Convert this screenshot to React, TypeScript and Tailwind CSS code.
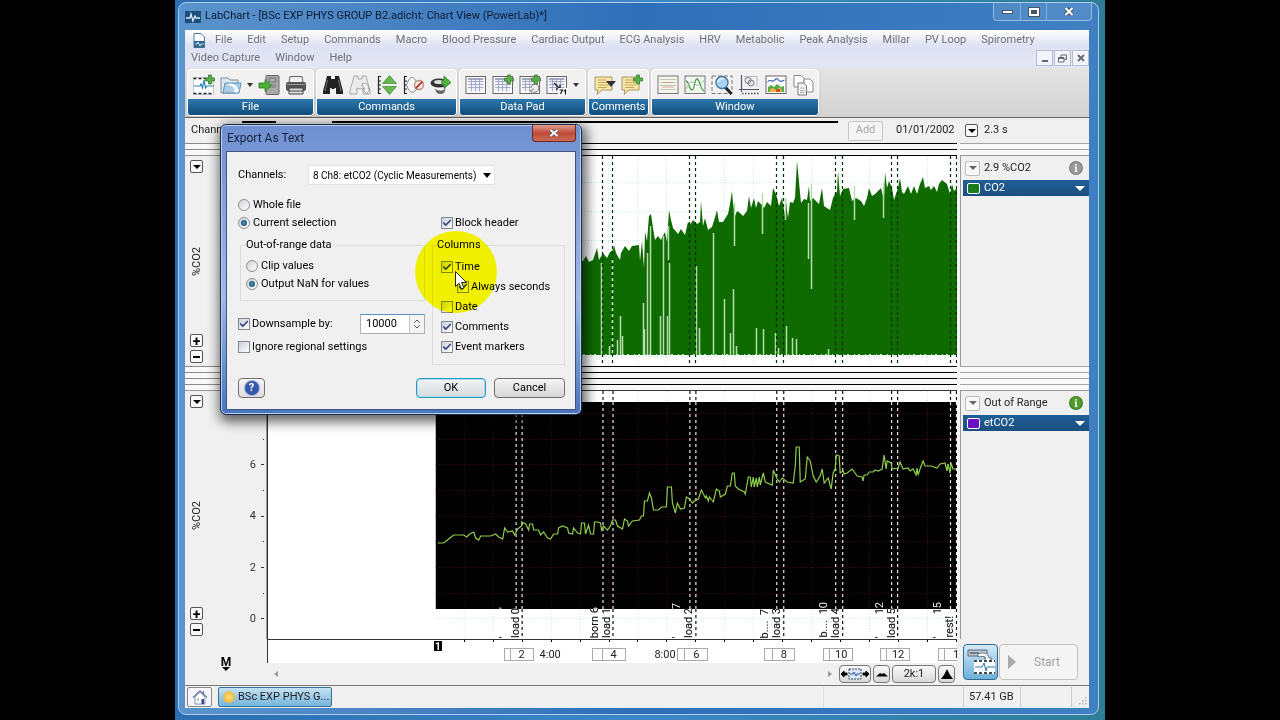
import React from 'react';
import { Check, ChevronsUpDown } from 'lucide-react';

const MENU_ROW_1 = [
  'File', 'Edit', 'Setup', 'Commands', 'Macro', 'Blood Pressure', 'Cardiac Output',
  'ECG Analysis', 'HRV', 'Metabolic', 'Peak Analysis', 'Millar', 'PV Loop', 'Spirometry',
];
const MENU_ROW_2 = ['Video Capture', 'Window', 'Help'];

// chart space: 690 units wide, the recording starts at 168
const CHART_W = 690;
const DATA_X = 168;
const GRID_X = Array.from({ length: 18 }, (_, i) => 196 + i * 29);
const MARKERS = [248, 254, 335, 345, 422, 428, 509, 516, 568, 575, 624, 630, 683, 689];

const CO2_TOP =
  '168,125 200,122 240,120 270,116 300,110 316,105 319,100 322,106 326,104 330,92 332,104 336,97 340,102 343,96 346,94 347,89 349,97 353,104 354,97 358,90 362,95 365,90 372,89 373,105 375,85 377,112 378,76 380,85 382,60 384,58 386,72 388,84 391,80 394,84 398,76 400,86 402,54 404,64 406,72 411,78 414,73 418,79 421,66 423,69 426,64 430,68 433,66 434,45 436,70 438,62 441,74 445,71 449,58 450,54 452,66 456,66 461,58 463,48 465,35 466,47 468,60 470,55 473,57 476,60 480,55 482,40 484,52 487,42 489,52 491,45 494,48 497,52 500,46 504,50 506,32 509,38 512,50 515,42 518,60 519,45 521,62 523,46 526,47 528,42 529,24 530,5 532,26 534,47 537,43 540,44 542,30 543,45 546,42 552,48 555,32 557,50 563,54 566,42 568,38 570,36 571,15 573,40 576,33 582,32 585,45 589,42 594,45 597,50 600,42 602,32 605,40 608,38 614,32 617,44 618,16 620,32 622,25 625,32 627,44 631,32 633,22 635,36 637,38 641,30 644,38 647,30 650,38 653,28 656,21 658,32 662,30 664,34 667,30 670,36 672,28 675,24 680,28 683,38 685,28 687,35 690,32';

// x, top, bottom of the drop-outs in the CO2 signal
const CO2_DROPS = [
  [334, 107, 199], [342, 190, 199], [350, 184, 199], [353, 160, 199], [355, 180, 199], [376, 147, 199],
  [377, 173, 199], [380, 97, 199], [383, 70, 199], [393, 160, 199], [396, 80, 199], [400, 160, 199],
  [402, 107, 199], [401, 70, 104], [429, 110, 199], [432, 172, 199], [446, 77, 199], [457, 143, 199],
  [463, 177, 199], [466, 133, 199], [467, 47, 90], [469, 190, 199], [489, 172, 199], [496, 173, 199],
  [495, 37, 78], [508, 177, 199], [511, 192, 199], [519, 170, 199], [525, 182, 199], [529, 183, 199],
  [518, 42, 64], [541, 47, 103], [544, 28, 133], [561, 193, 199], [587, 30, 64], [616, 27, 62],
];

const ETCO2 =
  '170,152 176,152 181,148 186,144 196,144 199,146 202,143 206,141 208,147 211,149 213,145 223,145 228,143 231,146 235,148 237,137 240,141 245,140 247,144 250,138 254,135 254,131 258,133 261,139 262,133 265,133 266,139 271,139 273,144 276,141 280,147 283,148 286,143 290,143 291,137 295,135 300,137 301,142 305,143 306,137 310,142 313,143 314,132 317,132 318,143 321,134 323,143 326,143 327,131 330,131 333,132 334,139 336,135 340,139 343,135 345,129 348,129 350,135 355,138 357,128 360,130 361,135 365,130 372,129 374,125 376,125 377,110 380,110 382,102 384,107 386,119 391,119 394,116 399,116 400,96 404,96 405,112 408,122 410,112 413,118 417,117 419,106 422,108 425,112 427,110 431,108 434,99 438,107 439,105 441,110 442,106 446,111 449,98 452,100 453,106 458,103 460,95 463,95 465,82 467,82 468,95 471,98 477,101 478,103 481,86 483,86 484,96 486,86 487,96 489,87 490,96 492,86 493,94 496,82 498,91 505,94 506,79 510,88 512,91 515,87 520,91 526,92 528,75 529,56 532,56 533,91 538,88 540,66 543,70 546,85 549,91 553,85 555,78 557,92 561,87 564,98 566,82 568,78 569,64 572,65 573,82 576,80 577,83 580,82 585,78 590,85 595,86 596,90 597,84 600,84 602,81 606,81 608,79 611,80 615,78 617,64 619,78 620,70 624,72 625,78 631,77 633,71 636,78 641,77 643,80 646,78 649,84 650,77 651,84 653,78 656,70 658,75 664,75 670,77 673,73 678,72 680,80 681,73 683,82 684,72 686,78 689,78';

const COMMENTS = [
  { x: 247, text: 'load 0', prev: "'          '" },
  { x: 338, text: 'load 1', prev: 'born 6' },
  { x: 421, text: 'load 2', prev: "'          7" },
  { x: 509, text: 'load 3', prev: 'b....  7' },
  { x: 568, text: 'load 4', prev: 'b....  10' },
  { x: 624, text: 'load 5', prev: "'        12" },
  { x: 682, text: 'rest!', prev: "'        15" },
];

const TIME_MARKS = [
  { x: 236, w: 30, div: 6, text: '2' },
  { x: 324, w: 34, div: 10, text: '4' },
  { x: 410, w: 31, div: 7, text: '6' },
  { x: 497, w: 31, div: 8, text: '8' },
  { x: 556, w: 30, div: 6, text: '10' },
  { x: 613, w: 30, div: 6, text: '12' },
  { x: 671, w: 30, div: 6, text: '1' },
];

const pct = (x: number) => `${(x / CHART_W) * 100}%`;

/* ---------- toolbar icons ---------- */

const Icon: React.FC<{ children: React.ReactNode; className?: string }> = ({ children, className }) => (
  <svg viewBox="0 0 22 22" className={className ?? 'size-[22px]'} fill="none" aria-hidden="true">
    {children}
  </svg>
);

const Plus = () => (
  <path d="M15.500 1h3v3h3v3h-3v3h-3V7h-3V4h3z" fill="#5cae4a" stroke="#357f2a" strokeWidth="0.8" />
);

const Sheet = () => (
  <>
    <rect x="1" y="2.5" width="19.5" height="17" fill="#fff" stroke="#666" />
    <rect x="3" y="4.5" width="15.5" height="13" fill="#eef1f8" />
    <path d="M3 7.5h15.5M3 10.5h15.5M3 13.5h15.5M6.5 4.5v13M10.5 4.5v13M14.5 4.5v13" stroke="#8a90b4" strokeWidth="0.7" />
    <path d="M3 5h15.5" stroke="#8a90b4" strokeWidth="1.4" />
  </>
);

const Note = () => (
  <path d="M1 3h17v13H8l-5 4.5 1-4.5H1z" fill="#f8e6a8" stroke="#96834d" strokeWidth="0.8" />
);

const NoteLines = () => <path d="M4 6h8M4 8.5h11M4 11h11M4 13.5h9" stroke="#b89842" strokeWidth="0.8" />;

const fileIcons = [
  <Icon key="new">
    <rect x="0.5" y="3.5" width="20" height="17" fill="#fff" stroke="#9ab" strokeWidth="0.600" />
    <path d="M0.5 4.5h20M0.5 19.5h20" stroke="#222" strokeWidth="1.6" strokeDasharray="3 2" />
    <path d="M1 12h6l1-2 1.500 4 1.500-8 1.500 8 1.500-2H21" stroke="#2c83b6" strokeWidth="1.200" />
    <Plus />
  </Icon>,
  <Icon key="open">
    <path d="M1 4h7l2 2h8v13H1z" fill="#dfe9f1" stroke="#788b99" />
    <path d="M3 19 5 9h16l-2 10z" fill="#a9cfe8" stroke="#5f8eaf" />
    <path d="M6 11c6-3 11 0 12 5l2-1-3 4-4-2 2-1c-1-3-4-5-9-5z" fill="#fff" />
  </Icon>,
  <Icon key="save">
    <rect x="8" y="1.500" width="13" height="19" rx="1" fill="#a9a9a9" stroke="#666" />
    <path d="M11 4h7v4h-7zM11 11h7M11 13h7" stroke="#777" />
    <path d="M1 9h6V5.500l6.500 6-6.500 6V14H1z" fill="#4aae35" stroke="#2f7a22" strokeWidth="0.8" />
  </Icon>,
  <Icon key="print">
    <path d="M5 2.500h12l1 6H4z" fill="#eee" stroke="#666" />
    <rect x="1" y="8" width="20" height="9" rx="2" fill="#555" />
    <path d="M2 10.500h18" stroke="#999" />
    <path d="M4 14h14v6H4z" fill="#ddd" stroke="#444" />
    <path d="M4 17h14" stroke="#444" />
  </Icon>,
];

const binocularsPath =
  'M5 2h4v3h4V2h4l1 4 3 11v3h-7v-6h-1l-1 1h-2l-1-1H8v6H1v-3L4 6z';

const commandIcons = [
  <Icon key="find">
    <path d={binocularsPath} fill="#222" />
    <path d="M5.500 6 3 17M16.500 6 19 17" stroke="#888" strokeWidth="0.8" />
  </Icon>,
  <Icon key="findnext">
    <path d={binocularsPath} fill="#ececec" stroke="#999" strokeWidth="0.8" />
    <path d="M13 10c4-2 7 1 6 5l2 0-3.500 5-3.500-5h2c0-2-1-3-3-3z" fill="#fff" stroke="#888" strokeWidth="0.8" />
  </Icon>,
  <Icon key="autoscale">
    <path d="M2.500 2v18M2.500 2.500H5M2.500 7H5M2.500 11H5M2.500 15H5M2.500 19.500H5" stroke="#222" strokeWidth="1.200" />
    <path d="M13.500 1.500 20.500 9.500h-14zM13.500 20.500l7-8h-14z" fill="#67b651" stroke="#3b8a2c" strokeWidth="0.700" />
  </Icon>,
  <Icon key="noscale">
    <path d="M1.500 2v18M1.500 2.500H4M1.500 7H4M1.500 11H4M1.500 15H4M1.500 19.500H4" stroke="#222" strokeWidth="1.200" />
    <path d="M4 10c3-9 7-8 10-1M4 12c3 8 7 8 10 2" fill="#f8f8f8" stroke="#888" />
    <circle cx="16" cy="11" r="4.500" fill="#f4ebe8" stroke="#b98a80" strokeWidth="1.400" />
    <path d="m12.500 14.500 7-7" stroke="#c0402e" strokeWidth="1.800" />
  </Icon>,
  <Icon key="macro">
    <ellipse cx="9" cy="9" rx="8.500" ry="4.500" fill="#333" />
    <ellipse cx="9" cy="8" rx="5" ry="2" fill="#ddd" />
    <path d="M3 13c2 4 10 5 13 1l-2 5c-3 2-8 1-8-2z" fill="#666" />
    <path d="M12 6h2V2l7 6.500-7 6V11h-2z" fill="#55b03f" stroke="#2f7a22" strokeWidth="0.800" />
  </Icon>,
];

const dataPadIcons = [
  <Icon key="pad"><Sheet /></Icon>,
  <Icon key="padadd"><Sheet /><Plus /></Icon>,
  <Icon key="padmulti">
    <Sheet />
    <path d="M12 14a4 4 0 1 1 3 4l0 2-4-3 4-2" fill="#eee" stroke="#777" />
    <Plus />
  </Icon>,
  <Icon key="padopts">
    <Sheet />
    <path d="m8 9 6 6M14 11v4h-4" stroke="#222" strokeWidth="1.400" />
    <rect x="12" y="14" width="10" height="7.500" fill="#fff" />
    <path d="M13.500 16h3l-2 4M18 17l1.500-1v4.500" stroke="#111" strokeWidth="1.200" />
  </Icon>,
];

const commentIcons = [
  <Icon key="note"><Note /><NoteLines /><path d="M12 7h10l-5 6z" fill="#333" /></Icon>,
  <Icon key="noteadd"><Note /><NoteLines /><Plus /></Icon>,
];

const windowIcons = [
  <Icon key="zoomlist">
    <rect x="1" y="2" width="20" height="17.500" fill="#f5f5ec" stroke="#777" />
    <path d="M3 5.500h16M3 8.500h16M3 11.500h16M3 15.500h16" stroke="#b9c9b4" />
    <path d="M6 8.500h10M5 13h12" stroke="#d8937e" strokeWidth="0.800" />
  </Icon>,
  <Icon key="scope">
    <rect x="1" y="2" width="20" height="17.500" fill="#f2f6ee" stroke="#777" />
    <path d="M2 7c3 0 3 9 6 9s2-11 5-11 3 11 7 12" stroke="#4c9c50" strokeWidth="1.300" />
    <path d="M2 15c3-6 5-9 8-6s5 4 10-3" stroke="#9bc49a" />
  </Icon>,
  <Icon key="zoom">
    <rect x="1" y="2" width="20" height="17.500" fill="#f2f2f2" stroke="#777" strokeDasharray="4 2" />
    <path d="m14.500 13.500 6 6.500" stroke="#222" strokeWidth="3" />
    <circle cx="11" cy="8.500" r="6" fill="#a8d3f2" stroke="#3f77a6" strokeWidth="1.400" />
    <path d="M7 8a4 4 0 0 1 6-3" stroke="#fff" strokeWidth="1.300" />
  </Icon>,
  <Icon key="xy">
    <path d="M3.500 1v17M1 15.500h20" stroke="#556" strokeWidth="1.200" />
    <path d="M4 19.500h17" stroke="#556" strokeWidth="1.500" strokeDasharray="1.500 1.500" />
    <path d="M6 2.500h13v10" stroke="#bbc" />
    <circle cx="10" cy="6.500" r="3" stroke="#778" />
    <circle cx="13" cy="9" r="3" stroke="#778" />
  </Icon>,
  <Icon key="spectrum">
    <rect x="1" y="2" width="20" height="17.500" fill="#fff" stroke="#666" />
    <path d="M2.500 8c3-4 4 0 6-1s3-4 5-1 4 1 6 0" stroke="#3f63b5" strokeWidth="1.200" />
    <path d="M3 18v-5l3-2 3 2 3-3 4 3 3-1v6z" fill="#59a94a" />
    <path d="M5 18v-3l3-1 3 2 4-3 2 5z" fill="#f0b640" />
    <path d="M11 15h4v3h-4z" fill="#d44a33" />
  </Icon>,
  <Icon key="layout">
    <path d="M2 1.500h7l3 3V13H2z" fill="#fff" stroke="#888" />
    <path d="M12 5h6l3 3v10h-9z" fill="#fff" stroke="#888" />
    <path d="M6 9h6l2.500 3v9H6z" fill="#f4f4f4" stroke="#777" />
    <path d="M8 14h4.500M8 16.500h4.500M8 18.500h4.500" stroke="#999" strokeWidth="0.800" />
  </Icon>,
];

const DropArrow = () => <span className="border-x-[3px] border-t-4 border-x-transparent border-t-[#333]" />;

const ToolGroup: React.FC<{ label: string; icons: React.ReactNode[]; arrowAfter?: number; className?: string }> = ({
  label,
  icons,
  arrowAfter,
  className,
}) => (
  <section className={`flex flex-col overflow-hidden rounded-sm border border-white bg-[#f1f1f1] shadow-sm ${className ?? ''}`}>
    <div className="flex flex-1 items-center gap-[5px] px-[5px]">
      {icons.map((icon, i) => (
        <React.Fragment key={i}>
          <button className="shrink-0">{icon}</button>
          {arrowAfter === i && <DropArrow />}
        </React.Fragment>
      ))}
    </div>
    <h2 className="flex h-4 items-center justify-center bg-linear-to-b from-[#2d78aa] to-[#0f4d7d] text-[11px] text-white">
      {label}
    </h2>
  </section>
);

/* ---------- small controls ---------- */

const SmallButton: React.FC<{ label: string; faded?: boolean; children: React.ReactNode }> = ({ label, faded, children }) => (
  <button
    aria-label={label}
    className={`flex shrink-0 items-center justify-center rounded-xs border bg-[#f8f8f8] ${faded ? 'size-[15px] border-[#bbb] text-[#666]' : 'size-[13px] border-[#555] text-black'}`}
  >
    {children}
  </button>
);

const Down = () => <span className="border-x-4 border-t-4 border-x-transparent border-t-current" />;

const CheckField: React.FC<{ label: string; checked?: boolean; className?: string }> = ({ label, checked, className }) => (
  <label className={`flex h-5 items-center gap-[2px] ${className ?? ''}`}>
    <span className="grid place-items-center *:col-start-1 *:row-start-1">
      <input
        type="checkbox"
        defaultChecked={checked}
        className="peer size-3 appearance-none border border-[#7f8a94] bg-linear-to-br from-[#c9cfdc] to-white"
      />
      <Check className="pointer-events-none hidden size-[10px] text-[#3a477f] peer-checked:block" strokeWidth={4} />
    </span>
    {label}
  </label>
);

const RadioField: React.FC<{ name: string; label: string; checked?: boolean }> = ({ name, label, checked }) => (
  <label className="flex h-[18px] items-center gap-[3px]">
    <span className="grid place-items-center *:col-start-1 *:row-start-1">
      <input
        type="radio"
        name={name}
        defaultChecked={checked}
        className="peer size-3 appearance-none rounded-full border border-[#8e8f8f] bg-linear-to-br from-[#cfd3d8] to-white"
      />
      <span className="pointer-events-none hidden size-[6px] rounded-full bg-radial from-[#4f9ac4] to-[#0d3a5c] peer-checked:block" />
    </span>
    {label}
  </label>
);

/* ---------- chart parts ---------- */

const Rules: React.FC<{ count: number; className: string }> = ({ count, className }) => (
  <div>
    {Array.from({ length: count }, (_, i) => (
      <div key={i} className={`h-[6px] border-t bg-[#f8f8f8] ${className}`} />
    ))}
  </div>
);

const Splitter: React.FC<{ count: number }> = ({ count }) => (
  <div className="grid grid-cols-[77px_1fr_129px] gap-x-[3px] bg-[#f5f5f5]">
    <Rules count={count} className="border-[#8a8a8a]" />
    <Rules count={count} className="border-black" />
    <Rules count={count} className="border-[#a5a5a5]" />
  </div>
);

const AmplitudePanel: React.FC<{ scale?: boolean }> = ({ scale }) => (
  <div className="flex justify-between border-t border-[#999] bg-[#f0f0f0]">
    <div className="flex w-[23px] flex-col items-center gap-[3px] pt-1 pb-[3px]">
      <SmallButton label="Scale menu"><Down /></SmallButton>
      <div className="flex flex-1 items-center pt-4">
        <span className="rotate-180 text-[11px] leading-4 [writing-mode:vertical-rl]">%CO2</span>
      </div>
      <SmallButton label="Zoom in"><span className="text-sm leading-none font-bold">+</span></SmallButton>
      <SmallButton label="Zoom out"><span className="h-[2px] w-[7px] bg-black" /></SmallButton>
    </div>
    <div className="flex border-r border-[#999] pr-[2px]">
      {scale && (
        <div className="flex flex-col items-end justify-between pt-10 pb-[12px] text-[11px] leading-4 text-[#333]">
          {['', '6', '', '4', '', '2', '', '0'].map((n, i) => (
            <span key={i} className="flex h-4 items-center gap-[5px]">
              {n}
              <span className={n ? 'h-px w-[3px] bg-[#333]' : 'h-px w-px bg-[#333]'} />
            </span>
          ))}
        </div>
      )}
    </div>
  </div>
);

const ChannelPanel: React.FC<{ value: string; name: string; color: string; info: string }> = ({ value, name, color, info }) => (
  <div className="ml-[3px] border-t border-l border-[#999] bg-[#f0f0f0] pl-[2px]">
    <div className="flex h-6 items-center gap-[4px] pr-[6px] pl-[2px] text-[11px]">
      <SmallButton label={`${name} options`} faded><Down /></SmallButton>
      <span className="flex-1">{value}</span>
      <span className={`flex size-[14px] items-center justify-center rounded-full border border-black/20 font-serif text-[11px] leading-none font-bold text-white ${info}`}>
        i
      </span>
    </div>
    <button className="flex h-4 w-full items-center gap-1 bg-linear-to-b from-[#1f5f97] to-[#1c4f80] pr-1 pl-1 text-left text-[11px] text-white">
      <span className={`h-[11px] w-[13px] rounded-xs border border-white ${color}`} />
      <span className="flex-1">{name}</span>
      <span className="border-x-[5px] border-t-[5px] border-x-transparent border-t-white" />
    </button>
  </div>
);

const Co2Chart = () => (
  <svg viewBox="0 0 690 210" preserveAspectRatio="none" className="block h-full w-full" role="img" aria-label="CO2 signal">
    <g stroke="#bfeee2" strokeDasharray="1 2">
      {GRID_X.map((x) => <path key={x} d={`M${x + 0.5} 0V210`} />)}
      {[26, 55, 84, 113, 142, 171, 200].map((y) => <path key={y} d={`M${DATA_X} ${y + 0.5}H690`} />)}
    </g>
    <polygon points={`168,199 ${CO2_TOP} 690,199`} fill="#0f6b00" />
    {CO2_DROPS.map(([x, y1, y2]) => (
      <path key={`${x}-${y1}`} d={`M${x + 0.5} ${y1}V${y2}`} stroke="#b7dcb0" strokeWidth="1.500" />
    ))}
    <path d="M316 198.500H690" stroke="#b7dcb0" strokeDasharray="2 5 1 3" />
    {MARKERS.map((x) => (
      <g key={x}>
        <path d={`M${x + 0.5} 0V210`} stroke="#062a0a" strokeWidth="1.200" strokeDasharray="3 3" />
        {x === 345 && <path d="M345.500 104V199" stroke="#cfe6cb" strokeWidth="1.500" strokeDasharray="3 3" />}
      </g>
    ))}
  </svg>
);

const EtCo2Chart = () => (
  <>
    <svg viewBox="0 0 690 248" preserveAspectRatio="none" className="block h-full w-full" role="img" aria-label="etCO2 signal">
      <g stroke="#bfeee2" strokeDasharray="1 2">
        {GRID_X.map((x) => <path key={x} d={`M${x + 0.5} 0V248`} />)}
        <path d="M168 227.500H690" />
      </g>
      <rect x={DATA_X} y="11" width="522" height="207" />
      <g stroke="#4c0d14" strokeDasharray="1 2">
        {GRID_X.map((x) => <path key={x} d={`M${x + 0.5} 11V218`} />)}
        {[22, 48, 73, 99, 125, 150, 176, 202].map((y) => <path key={y} d={`M${DATA_X} ${y + 0.5}H690`} />)}
      </g>
      {/* the left marker of a pair ends at its comment text */}
      {MARKERS.map((x, i) => (
        <g key={x} strokeWidth="1.200" strokeDasharray="3 3">
          <path d={`M${x + 0.5} 0V11${i % 2 ? `M${x + 0.5} 218V248` : ''}`} stroke="#111" />
          <path d={`M${x + 0.5} 11V218`} stroke="#e6e6e6" />
        </g>
      ))}
      <polyline points={ETCO2} fill="none" stroke="#8fce4b" strokeWidth="1.200" />
    </svg>
    {COMMENTS.map(({ x, text, prev }) => (
      <div
        key={x}
        style={{ left: pct(x) }}
        className="absolute bottom-px flex -translate-x-[17px] items-end text-[11px] leading-3 whitespace-pre text-[#eee] mix-blend-difference"
      >
        <span className="rotate-180 [writing-mode:vertical-rl]">{prev}</span>
        <span className="rotate-180 [writing-mode:vertical-rl]">{text}</span>
      </div>
    ))}
  </>
);

const TimeAxis = () => (
  <div className="relative h-6 overflow-hidden border-t border-l border-[#333] bg-white text-[11px]">
    {GRID_X.map((x) => (
      <span key={x} style={{ left: pct(x) }} className="absolute top-0 h-[2px] w-px bg-black" />
    ))}
    <span style={{ left: pct(166) }} className="absolute top-px flex h-[10px] w-2 items-center justify-center bg-black text-[10px] font-bold text-white">
      1
    </span>
    {TIME_MARKS.map(({ x, w, div, text }) => (
      <span key={x} style={{ left: pct(x), width: w }} className="absolute top-2 flex h-[13px] border border-[#aaa] leading-[11px]">
        <span style={{ width: div }} className="border-r border-[#aaa]" />
        <span className="flex-1 text-center">{text}</span>
      </span>
    ))}
    <span style={{ left: pct(272) }} className="absolute top-2 leading-[14px]">4:00</span>
    <span style={{ left: pct(387) }} className="absolute top-2 leading-[14px]">8:00</span>
  </div>
);

/* ---------- export dialog ---------- */

const ExportDialog = () => (
  <div
    role="dialog"
    aria-label="Export As Text"
    className="absolute top-[124px] left-[45px] w-[362px] rounded-md border border-[#1d2c48] bg-linear-to-b from-[#6f8fd0] via-[#9db9e4] via-60% to-[#4a74bd] px-[5px] pb-1 text-[11px] text-black shadow-[2px_4px_12px_3px_rgba(0,0,0,0.6)] inset-ring inset-ring-[#b9d2f3]"
  >
    <div className="flex h-[26px] items-center justify-between pl-px">
      <h1 className="text-xs text-[#16233f]">Export As Text</h1>
      <button
        aria-label="Close"
        className="flex h-[17px] w-11 items-center justify-center self-start rounded-b-sm border border-t-0 border-[#6b2a26] bg-linear-to-b from-[#dd9b90] via-[#c04a3a] to-[#c96a58]"
      >
        <svg viewBox="0 0 10 8" className="h-2 w-[10px]">
          <path d="m1.500 1 7 6m0-6-7 6" stroke="#555" strokeWidth="3.400" />
          <path d="m1.500 1 7 6m0-6-7 6" stroke="#fff" strokeWidth="2" />
        </svg>
      </button>
    </div>
    <form onSubmit={(e) => e.preventDefault()} className="border border-[#3d5585] bg-[#f0f0f0] pt-[13px] pr-[10px] pb-[11px] pl-[11px]">
      <div className="flex items-center">
        <label htmlFor="channels" className="w-[70px]">Channels:</label>
        <div className="grid w-[187px] items-center *:col-start-1 *:row-start-1">
          <select id="channels" className="h-5 w-full appearance-none border border-[#e3e3e3] bg-white pr-[14px] pl-1 text-[10px]">
            <option>8 Ch8: etCO2 (Cyclic Measurements)</option>
          </select>
          <span className="pointer-events-none mr-1 justify-self-end border-x-4 border-t-[5px] border-x-transparent border-t-black" />
        </div>
      </div>
      <div className="mt-[11px] flex justify-between">
        <div className="w-[187px]">
          <RadioField name="range" label="Whole file" />
          <RadioField name="range" label="Current selection" checked />
          <fieldset className="mt-[5px] ml-[2px] border border-[#dcdcdc] pt-1 pb-[7px] pl-[5px]">
            <legend className="pr-1 leading-4">Out-of-range data</legend>
            <RadioField name="oor" label="Clip values" />
            <RadioField name="oor" label="Output NaN for values" checked />
          </fieldset>
          <div className="mt-[13px] flex items-center justify-between">
            <CheckField label="Downsample by:" checked />
            <div className="flex h-5 w-[65px] border border-[#abadb3] border-t-[#5794bf] bg-white">
              <input aria-label="Downsample factor" defaultValue="10000" className="w-12 pl-[5px]" />
              <button aria-label="Step" className="flex flex-1 items-center justify-center border-l border-[#c4c4c4] bg-[#f3f3f3] text-[#555]">
                <ChevronsUpDown className="size-3" />
              </button>
            </div>
          </div>
          <CheckField label="Ignore regional settings" className="mt-[3px]" />
        </div>
        <div className="w-[133px] pt-[17px]">
          <CheckField label="Block header" checked className="pl-[9px]" />
          <fieldset className="mt-1 border border-[#dcdcdc] pt-1 pb-[7px] pl-[8px]">
            <legend className="-ml-1 pr-1 leading-4">Columns</legend>
            <CheckField label="Time" checked />
            <CheckField label="Always seconds" checked className="pl-4" />
            <CheckField label="Date" />
            <CheckField label="Comments" checked />
            <CheckField label="Event markers" checked />
          </fieldset>
        </div>
      </div>
      <div className="mt-[13px] flex gap-2">
        <button aria-label="Help" className="mr-auto flex h-5 w-[27px] items-center justify-center rounded-sm border border-[#707070] bg-linear-to-b from-[#f6f6f6] to-[#dcdcdc]">
          <span className="flex size-[14px] items-center justify-center rounded-full bg-[#3457a8] text-[11px] font-bold text-white ring-1 ring-[#9fb3dc]">?</span>
        </button>
        <button className="h-5 w-[70px] rounded-sm border border-[#2c9bc4] bg-linear-to-b from-[#f4f4f4] to-[#d4dade] inset-ring inset-ring-[#a5dcf0]">OK</button>
        <button className="h-5 w-[71px] rounded-sm border border-[#707070] bg-linear-to-b from-[#f4f4f4] to-[#d6d6d6]">Cancel</button>
      </div>
    </form>
    {/* click highlight and pointer */}
    <div className="pointer-events-none absolute top-[106px] left-[194px] size-[82px] rounded-full bg-[#ffff00] mix-blend-multiply" />
    <svg viewBox="0 0 12 19" className="pointer-events-none absolute top-[146px] left-[234px] h-[19px] w-3">
      <path d="M.5.500v15l3.500-3.200 2.500 5.700 2.500-1-2.500-5.500h5z" fill="#fff" stroke="#222" />
    </svg>
  </div>
);

/* ---------- window ---------- */

const captionButton = 'flex h-full items-center justify-center border-r border-white/30';
const mdiButton = 'flex h-4 w-[17px] items-center justify-center border border-[#b5bdd3] bg-[#f2f4fb] text-[#667]';
const zoomButton = 'flex h-[18px] items-center justify-center rounded-sm border border-[#777] bg-linear-to-b from-[#fafafa] to-[#d8d8d8]';

const App: React.FC = () => {
  return (
    <div className="flex min-h-screen flex-col bg-black px-[175px] font-[Roboto,'Liberation_Sans',sans-serif] text-[11px] text-[#222]">
      <div className="relative flex flex-1 flex-col bg-linear-to-r from-[#2d6db0] via-[#3f86c6] to-[#2f7d96] pt-[2px] pr-[6px] pb-[5px] pl-[3px]">
        <div className="flex flex-1 flex-col rounded-lg border border-[#a8cdee] bg-linear-to-r from-[#5b93cc] via-[#2f6fb8] to-[#3f7fc2] pr-[9px] pb-[6px] pl-[6px]">
          <header className="flex h-[27px] shrink-0 items-center gap-1">
            <svg viewBox="0 0 16 12" className="h-3 w-4">
              <rect width="16" height="12" fill="#1d4f7c" />
              <path d="M1 7h4l1-4 2 7 2-5 1 2h4" fill="none" stroke="#d5ecfb" strokeWidth="1.300" />
            </svg>
            <span className="text-[11px] text-[#0c1c33]">LabChart - [BSc EXP PHYS GROUP B2.adicht: Chart View (PowerLab)*]</span>
            <div className="-mr-[3px] ml-auto flex h-[18px] self-start rounded-b-sm border border-t-0 border-white/40 bg-white/10">
              <button aria-label="Minimize" className={`${captionButton} w-[27px]`}>
                <span className="h-[4px] w-[11px] border border-[#456] bg-white" />
              </button>
              <button aria-label="Maximize" className={`${captionButton} w-[26px]`}>
                <span className="h-[8px] w-[10px] border-2 border-white bg-[#456] ring-1 ring-[#456]" />
              </button>
              <button aria-label="Close window" className="flex w-11 items-center justify-center">
                <svg viewBox="0 0 10 9" className="h-[9px] w-[10px]">
                  <path d="m1.500 1 7 7m0-7-7 7" stroke="#345" strokeWidth="3.600" />
                  <path d="m1.500 1 7 7m0-7-7 7" stroke="#fff" strokeWidth="2.200" />
                </svg>
              </button>
            </div>
          </header>

          <nav className="flex h-[38px] shrink-0 flex-col justify-center bg-linear-to-b from-white via-[#dfe2f2] via-40% to-[#e4e6f6] text-[#6f7078]">
            <div className="flex h-[18px] items-center gap-[15px] pl-2 whitespace-nowrap">
              <svg viewBox="0 0 12 15" className="-mr-[5px] h-[15px] w-3">
                <path d="M1 .500h7l3.500 3.500v10.500H1z" fill="#fff" stroke="#4c7796" />
                <path d="M1 8h10.500v6.500H1z" fill="#2c678f" />
                <path d="M2 11h2l1-2 2 4 1-2h3" fill="none" stroke="#fff" strokeWidth="0.800" />
              </svg>
              {MENU_ROW_1.map((m) => <button key={m}>{m}</button>)}
            </div>
            <div className="flex h-[18px] items-center gap-[15px] pl-[6px]">
              {MENU_ROW_2.map((m) => <button key={m}>{m}</button>)}
              <div className="ml-auto flex gap-px">
                <button aria-label="Minimize document" className={mdiButton}><span className="mt-[6px] h-[2px] w-[6px] bg-current" /></button>
                <button aria-label="Restore document" className={mdiButton}>
                  <svg viewBox="0 0 9 9" className="size-[9px]" fill="none" stroke="currentColor">
                    <path d="M3 3V1h5.500v4.500H6.500M.500 3.500h5.500V8H.500zM.500 4.500H6" />
                  </svg>
                </button>
                <button aria-label="Close document" className={mdiButton}>
                  <svg viewBox="0 0 8 8" className="size-2" stroke="currentColor" strokeWidth="1.800"><path d="m1 1 6 6m0-6-6 6" /></svg>
                </button>
              </div>
            </div>
          </nav>

          <div className="flex h-[50px] shrink-0 gap-[2px] border-b border-[#666] bg-linear-to-b from-[#e4e4e4] to-[#d3d3d3] px-[2px] pt-px pb-px">
            <ToolGroup label="File" icons={fileIcons} arrowAfter={1} className="w-[127px]" />
            <ToolGroup label="Commands" icons={commandIcons} className="w-[141px]" />
            <ToolGroup label="Data Pad" icons={dataPadIcons} arrowAfter={3} className="w-[127px]" />
            <ToolGroup label="Comments" icons={commentIcons} className="w-[61px]" />
            <ToolGroup label="Window" icons={windowIcons} className="w-[168px]" />
          </div>

          <div className="flex h-[25px] shrink-0 items-center bg-[#f0f0f0] pl-[6px]">
            <span className="w-[51px]">Channel:</span>
            <input aria-label="Channel" className="mr-14 h-5 w-[34px] border-t-2 border-black" />
            <input aria-label="Comment" className="h-5 flex-1 border-t-2 border-black" />
            <button disabled className="ml-[10px] h-5 w-[35px] rounded-xs border border-[#c4c4c4] bg-[#f4f4f4] text-[#a5a5a5]">Add</button>
            <span className="ml-[13px] w-[69px]">01/01/2002</span>
            <SmallButton label="Rate menu"><Down /></SmallButton>
            <span className="w-[111px] pl-[6px]">2.3 s</span>
          </div>

          <Splitter count={2} />
          <div className="grid grow basis-[211px] grid-cols-[82px_1fr_132px] bg-[#f5f5f5]">
            <AmplitudePanel />
            <div className="relative border-t border-black bg-white">
              <div className="absolute inset-0"><Co2Chart /></div>
            </div>
            <ChannelPanel value="2.9 %CO2" name="CO2" color="bg-[#1b7a1b]" info="bg-[#999]" />
          </div>
          <Splitter count={4} />
          <div className="grid grow basis-[249px] grid-cols-[82px_1fr_132px] bg-[#f5f5f5]">
            <AmplitudePanel scale />
            <div className="relative isolate border-t border-l border-[#333] bg-white">
              <div className="absolute inset-0"><EtCo2Chart /></div>
            </div>
            <ChannelPanel value="Out of Range" name="etCO2" color="bg-[#6a10c8]" info="bg-[#4f9b2e]" />
          </div>

          <div className="grid h-[46px] shrink-0 grid-cols-[82px_1fr_132px] bg-[#f0f0f0]">
            <div className="flex flex-col items-center pt-[18px]">
              <span className="text-xs leading-[10px] font-bold text-black">M</span>
              <span className="border-x-4 border-t-4 border-x-transparent border-t-black" />
            </div>
            <div className="min-w-0">
              <TimeAxis />
              <div className="flex h-[22px] items-center gap-[2px] pr-[2px] pl-[7px]">
                <span className="border-y-[3px] border-r-4 border-y-transparent border-r-[#999]" />
                <span className="mr-[5px] ml-auto border-y-[3px] border-l-4 border-y-transparent border-l-[#999]" />
                <button aria-label="Fit" className={`${zoomButton} w-8`}>
                  <svg viewBox="0 0 28 12" className="h-3 w-7">
                    <path d="M0 6l3-3v2h3v2H3v2zM28 6l-3-3v2h-3v2h3v2z" fill="#000" stroke="#000" />
                    <rect x="8" y="1" width="12" height="10" fill="#dbe6f6" stroke="#345" strokeDasharray="2 1" />
                    <path d="M9 6h3l1-2 2 4 1-2h3" fill="none" stroke="#2a55a8" />
                  </svg>
                </button>
                <button aria-label="Compress" className={`${zoomButton} w-[17px]`}>
                  <svg viewBox="0 0 12 6" className="h-[6px] w-3"><path d="M0 5.500 4 2l2 1 2-1 4 3.500z" /></svg>
                </button>
                <button className={`${zoomButton} w-11`}>2k:1</button>
                <button aria-label="Expand" className={`${zoomButton} w-[17px]`}>
                  <svg viewBox="0 0 12 12" className="size-3"><path d="M0 11 3 7l3-6 3 6 3 4z" /></svg>
                </button>
              </div>
            </div>
            <div className="flex items-start gap-px pt-[5px] pl-[6px]">
              <button aria-label="Record to file" className="flex h-9 w-[35px] items-center justify-center rounded-sm border border-[#2f6a94] bg-linear-to-b from-[#d3eaf7] to-[#6cb1da]">
                <svg viewBox="0 0 30 30" className="size-[30px]" fill="none">
                  <path d="M2 3h19v6H2z" fill="#b8c7d1" stroke="#667" />
                  <path d="M4 6h9" stroke="#333" />
                  <path d="M12 7c6-2 10-1 11 4h3l-4 5-4-5h2c-1-2-4-2-8-1z" fill="#fff" stroke="#567" strokeWidth="0.800" />
                  <path d="M8 13h21v14H8z" fill="#fff" />
                  <path d="M8 14h21M8 26h21" stroke="#111" strokeWidth="1.600" strokeDasharray="3 2" />
                  <path d="M9 20h7l2-4 2 8 1-4h8" stroke="#2c78a8" />
                </svg>
              </button>
              <button disabled className="flex h-9 w-[79px] items-center gap-[18px] rounded-sm border border-[#c0c0c0] bg-[#f4f4f4] pl-2 text-xs text-[#a0a0a0]">
                <span className="border-y-[7px] border-l-8 border-y-transparent border-l-[#a8a8a8]" />
                Start
              </button>
            </div>
          </div>

          <footer className="flex h-[23px] shrink-0 items-center border-t border-[#777] bg-[#f0f0f0] pl-[2px]">
            <button aria-label="Home" className="flex h-5 w-[25px] items-center justify-center rounded-xs border border-[#888] bg-[#f6f6fa]">
              <svg viewBox="0 0 16 16" className="size-4" fill="none">
                <path d="M3 8v7h10V8L8 3z" fill="#fff" stroke="#8390b8" />
                <path d="M1 8.500 8 2l7 6.500M11.500 2v3" stroke="#7482b0" strokeWidth="1.400" />
                <path d="M9.500 10H12v5H9.500z" fill="#31488f" />
                <path d="M5 9.500h2v2H5z" fill="#8fa6d8" />
              </svg>
            </button>
            <button className="ml-[6px] flex h-5 w-[114px] items-center gap-[3px] rounded-xs border border-[#3d6f92] bg-linear-to-b from-[#c5e2f4] to-[#74b5dc] pl-1">
              <span className="size-3 shrink-0 rounded-full bg-radial from-[#ffe27a] to-[#e0a61c]" />
              BSc EXP PHYS G...
            </button>
            <span className="ml-auto h-5 w-[140px] border-l border-[#ddd]" />
            <span className="flex h-5 w-[57px] items-center border-l border-[#ccc] pl-[5px]">57.41 GB</span>
            <span className="h-5 w-[51px] border-l border-[#ccc]" />
            <span className="flex h-5 w-[18px] items-end justify-end border-l border-[#ccc] p-[2px]">
              <svg viewBox="0 0 9 9" className="size-[9px]" fill="#b5b5b5">
                <path d="M7 1h1.500v1.500H7zM7 4h1.500v1.500H7zM7 7h1.500v1.500H7zM4 4h1.500v1.500H4zM4 7h1.500v1.500H4zM1 7h1.500v1.500H1z" />
              </svg>
            </span>
          </footer>
        </div>
        <ExportDialog />
      </div>
    </div>
  );
};

export default App;
